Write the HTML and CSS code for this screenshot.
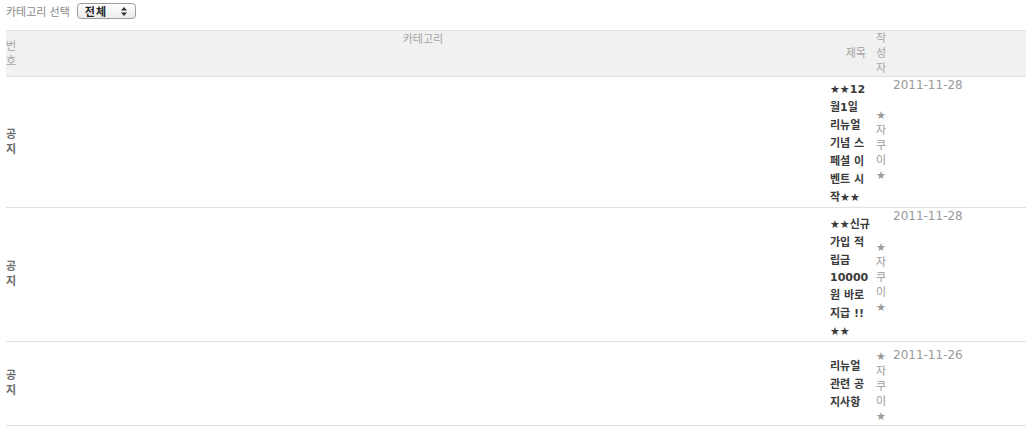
FILE: index.html
```html
<!DOCTYPE html>
<html lang="ko">
<head>
<meta charset="utf-8">
<title>공지</title>
<link rel="stylesheet" href="styles.css">
</head>
<body>
<div class="page">
  <div class="filter">
    <label class="filter-label" for="cat">카테고리 선택</label>
    <span class="select-wrap">
      <select id="cat" class="select"><option>전체</option></select>
      <svg class="select-arrow" width="6" height="9" viewBox="0 0 6 9"><path d="M3 0L6 3.5H0z M3 9L0 5.5H6z" fill="#333"/></svg>
    </span>
  </div>
  <table class="board">
    <colgroup>
      <col class="c-num"><col class="c-cat"><col class="c-title"><col class="c-author"><col class="c-date">
    </colgroup>
    <thead>
      <tr>
        <th class="num">번호</th>
        <th class="cat">카테고리</th>
        <th class="title">제목</th>
        <th class="author">작성자</th>
        <th class="date"></th>
      </tr>
    </thead>
    <tbody>
      <tr>
        <td class="num">공지</td>
        <td class="cat"></td>
        <td class="title">★★12월1일 리뉴얼 기념 스페셜 이벤트 시작★★</td>
        <td class="author">★자쿠이★</td>
        <td class="date">2011-11-28</td>
      </tr>
      <tr class="row-tall">
        <td class="num">공지</td>
        <td class="cat"></td>
        <td class="title">★★신규 가입 적립금 10000원 바로 지급 !!★★</td>
        <td class="author">★자쿠이★</td>
        <td class="date">2011-11-28</td>
      </tr>
      <tr class="row-short">
        <td class="num">공지</td>
        <td class="cat"></td>
        <td class="title">리뉴얼 관련 공지사항</td>
        <td class="author">★자쿠이★</td>
        <td class="date">2011-11-26</td>
      </tr>
    </tbody>
  </table>
</div>
</body>
</html>
```
FILE: styles.css
```css
html, body {
  margin: 0;
  padding: 0;
  background: #fff;
}
body {
  font-family: "DejaVu Sans", "Noto Sans CJK KR", sans-serif;
  font-size: 11px;
  color: #666;
}
.page {
  padding: 3px 0 0 6px;
}
.filter {
  display: flex;
  align-items: center;
  gap: 7px;
  height: 16px;
  margin-bottom: 11px;
}
.filter-label {
  color: #888;
  font-family: "Noto Sans CJK KR", sans-serif;
  font-size: 11px;
  line-height: 16px;
}
.select-wrap {
  position: relative;
  display: inline-block;
  height: 16px;
}
.select {
  -webkit-appearance: none;
  appearance: none;
  box-sizing: border-box;
  width: 59px;
  height: 16px;
  margin: 0;
  padding: 0 0 0 7px;
  border: 1px solid #9c9c9c;
  border-radius: 4px;
  background: linear-gradient(#ffffff, #ececec);
  font-family: "Noto Sans CJK KR", sans-serif;
  font-size: 11px;
  font-weight: bold;
  letter-spacing: 1px;
  line-height: 14px;
  color: #222;
  outline: none;
}
.select-arrow {
  position: absolute;
  left: 44px;
  top: 4px;
  pointer-events: none;
}
.board {
  table-layout: fixed;
  border-collapse: collapse;
  width: 1020px;
}
.c-num { width: 12px; }
.c-cat { width: 810px; }
.c-title { width: 42px; }
.c-author { width: 20px; }
.c-date { width: 136px; }
.board th {
  background: #f1f1f1;
  border-top: 1px solid #e2e2e2;
  border-bottom: 1px solid #e2e2e2;
  font-weight: normal;
  color: #a5a5a5;
  line-height: 15px;
  padding: 0;
  vertical-align: middle;
}
.board td {
  border-bottom: 1px solid #e2e2e2;
  padding: 1px 0;
  vertical-align: middle;
}
.num {
  text-align: left;
  word-break: break-all;
  line-height: 15px;
}
td.num {
  font-weight: bold;
  color: #6a6a6a;
}
.board th.cat {
  text-align: center;
  vertical-align: top;
  padding-top: 1px;
}
.board th.title {
  text-align: right;
  padding-right: 4px;
}
.board td.title {
  padding: 4px 0 0 2px;
  font-weight: bold;
  color: #3a3a3a;
  line-height: 18px;
  text-align: left;
  word-break: normal;
  overflow-wrap: normal;
}
.board .row-tall td.title {
  padding: 8px 0 0 2px;
  line-height: 17.8px;
}
.author {
  text-align: center;
  word-break: break-all;
  line-height: 15px;
}
.board th.author {
  padding: 0 3px 0 5px;
}
.board td.author {
  padding: 7px 3px 1px 5px;
  color: #9a9a9a;
}
.board td.date {
  vertical-align: top;
  padding: 1px 0 0 3px;
  font-size: 12px;
  line-height: 15px;
  color: #9a9a9a;
  white-space: nowrap;
}
.board .row-short td.date {
  padding-top: 6px;
}
```
